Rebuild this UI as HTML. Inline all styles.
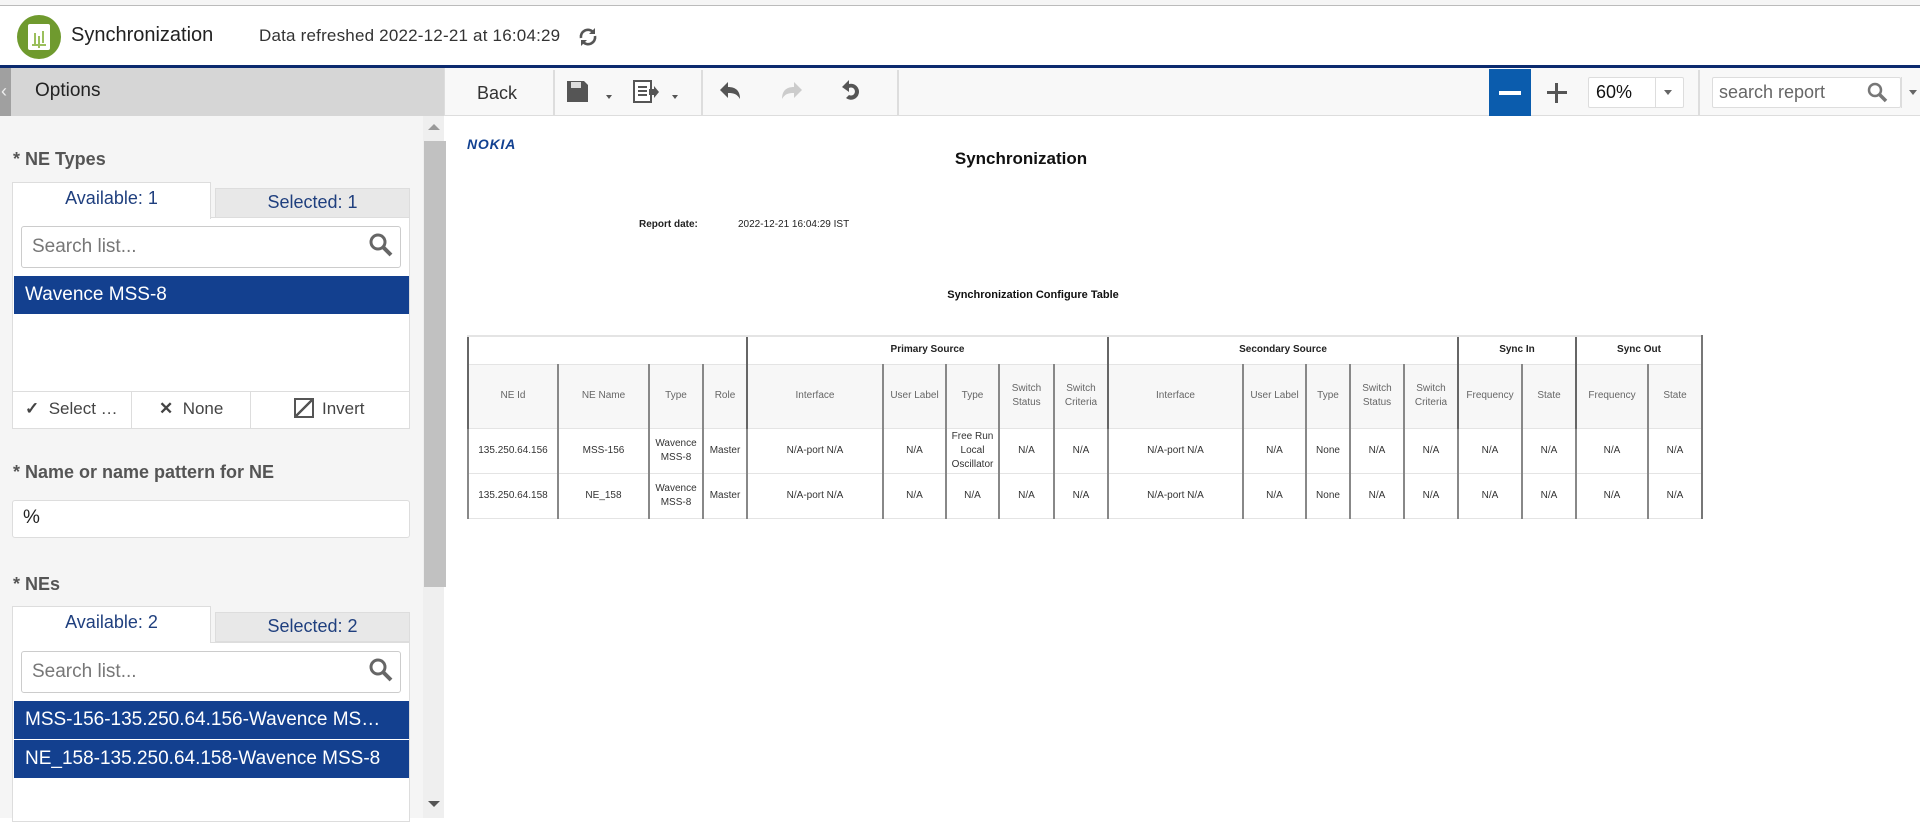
<!DOCTYPE html>
<html><head><meta charset="utf-8"><style>
*{box-sizing:border-box;margin:0;padding:0}
body{width:1920px;height:818px;overflow:hidden;background:#fff;font-family:"Liberation Sans",sans-serif;position:relative}
.a{position:absolute}
.lbl{position:absolute;left:13px;font-weight:bold;font-size:18px;color:#555}
.tab{position:absolute;font-size:18px;color:#1f3f7e;text-align:center}
.srch{position:absolute;left:21px;width:380px;height:42px;border:1px solid #ccc;border-radius:3px;background:#fff;font-size:19px;color:#777;padding:9px 10px}
.item{position:absolute;left:14px;width:395px;height:38px;background:#13408f;color:#fff;font-size:19px;padding:8px 11px;white-space:nowrap}
table{border-collapse:collapse;table-layout:fixed;position:absolute;left:467px;top:335px;font-size:10px;color:#333}
td,th{text-align:center;vertical-align:middle;border-left:2px solid #888;border-bottom:1px solid #e4e4e4;line-height:14px;padding:0 1px}
th{font-weight:normal;color:#666}
.g th{font-weight:bold;color:#222;height:28px;border-top:2px solid #e4e4e4}
.h th{height:64px;background:#f7f7f7}
.r td{height:45px}
.r2 td{height:45px}
.t{border-left-color:#666}
</style></head><body>
<div class="a" style="left:0;top:0;width:1920px;height:6px;background:#f5f5f5;border-bottom:1px solid #bbb"></div>
<div class="a" style="left:17px;top:15px;width:44px;height:44px;border-radius:50%;background:#6f9a2e"></div>
<div class="a" style="left:28px;top:24px;width:22px;height:26px;background:#fff;border-radius:2px"></div>
<div class="a" style="left:32px;top:32px;width:14px;height:14px;border-bottom:2px solid #9bbf5c"></div>
<div class="a" style="left:34px;top:33px;width:2px;height:12px;background:#9bbf5c;box-shadow:4px 3px 0 #9bbf5c,8px -2px 0 #9bbf5c"></div>
<div class="a" style="left:71px;top:24px;font-size:20px;color:#222">Synchronization</div>
<div class="a" style="left:259px;top:26px;font-size:17px;color:#333;letter-spacing:0.2px">Data refreshed 2022-12-21 at 16:04:29</div>
<svg class="a" style="left:576px;top:25px" width="24" height="24" viewBox="0 0 24 24"><path d="M5 13a7 7 0 0 1 12-6l1 1M19 11a7 7 0 0 1-12 6l-1-1" fill="none" stroke="#555" stroke-width="2.6"/><path d="M19 3v6h-6zM5 21v-6h6z" fill="#555"/></svg>
<div class="a" style="left:0;top:65px;width:1920px;height:3px;background:#0b2a6e"></div>
<div class="a" style="left:0;top:68px;width:444px;height:48px;background:#d6d6d6"></div>
<div class="a" style="left:0;top:68px;width:11px;height:48px;background:#a0a0a0;color:#eee;font-size:18px;padding-top:13px;padding-left:1px">‹</div>
<div class="a" style="left:35px;top:80px;font-size:19px;color:#222">Options</div>
<div class="a" style="left:0;top:116px;width:423px;height:702px;background:#f5f5f5"></div>
<div class="a" style="left:423px;top:116px;width:21px;height:702px;background:#efefef"></div>
<div class="a" style="left:424px;top:141px;width:22px;height:446px;background:#c1c1c1"></div>
<div class="a" style="left:428px;top:124px;border:6px solid transparent;border-bottom:6px solid #999;border-top:0"></div>
<div class="a" style="left:428px;top:801px;border:6px solid transparent;border-top:6px solid #555;border-bottom:0"></div>

<div class="lbl" style="top:149px">* NE Types</div>
<div class="a" style="left:12px;top:217px;width:398px;height:212px;background:#fff;border:1px solid #ddd"></div>
<div class="a" style="left:215px;top:188px;width:195px;height:30px;background:#e8e8e8;border:1px solid #ddd"></div>
<div class="a" style="left:12px;top:182px;width:199px;height:37px;background:#fff;border:1px solid #ddd;border-bottom:none"></div>
<div class="tab" style="left:12px;top:188px;width:199px">Available: 1</div>
<div class="tab" style="left:215px;top:192px;width:195px">Selected: 1</div>
<div class="srch" style="top:226px">Search list...</div>
<svg class="a" style="left:368px;top:232px" width="26" height="26" viewBox="0 0 26 26"><circle cx="10" cy="10" r="7" fill="none" stroke="#666" stroke-width="3"/><path d="M15 15l8 8" stroke="#666" stroke-width="4"/></svg>
<div class="item" style="top:276px">Wavence MSS-8</div>
<div class="a" style="left:12px;top:391px;width:398px;height:38px;border-top:1px solid #ddd"></div>
<div class="a" style="left:131px;top:392px;width:1px;height:37px;background:#ddd"></div>
<div class="a" style="left:250px;top:392px;width:1px;height:37px;background:#ddd"></div>
<div class="a" style="left:25px;top:399px;font-size:17px;color:#444"><b>✓</b>&nbsp; Select …</div>
<div class="a" style="left:159px;top:399px;font-size:17px;color:#444"><b>✕</b>&nbsp; None</div>
<div class="a" style="left:294px;top:398px;width:20px;height:20px;border:2px solid #555;background:linear-gradient(135deg,#fff 45%,#555 45%,#555 55%,#fff 55%)"></div>
<div class="a" style="left:322px;top:399px;font-size:17px;color:#444">Invert</div>

<div class="lbl" style="top:462px">* Name or name pattern for NE</div>
<div class="a" style="left:12px;top:500px;width:398px;height:38px;background:#fff;border:1px solid #ddd;border-radius:3px;font-size:19px;padding:6px 10px;color:#222">%</div>

<div class="lbl" style="top:574px">* NEs</div>
<div class="a" style="left:12px;top:642px;width:398px;height:180px;background:#fff;border:1px solid #ddd"></div>
<div class="a" style="left:215px;top:612px;width:195px;height:30px;background:#e8e8e8;border:1px solid #ddd"></div>
<div class="a" style="left:12px;top:606px;width:199px;height:37px;background:#fff;border:1px solid #ddd;border-bottom:none"></div>
<div class="tab" style="left:12px;top:612px;width:199px">Available: 2</div>
<div class="tab" style="left:215px;top:616px;width:195px">Selected: 2</div>
<div class="srch" style="top:651px">Search list...</div>
<svg class="a" style="left:368px;top:657px" width="26" height="26" viewBox="0 0 26 26"><circle cx="10" cy="10" r="7" fill="none" stroke="#666" stroke-width="3"/><path d="M15 15l8 8" stroke="#666" stroke-width="4"/></svg>
<div class="item" style="top:701px">MSS-156-135.250.64.156-Wavence MS…</div>
<div class="item" style="top:740px">NE_158-135.250.64.158-Wavence MSS-8</div>

<div class="a" style="left:444px;top:68px;width:1476px;height:48px;background:#f8f8f8;border-bottom:1px solid #ddd;border-left:1px solid #ddd"></div>
<div class="a" style="left:477px;top:83px;font-size:18px;color:#333">Back</div>
<div class="a" style="left:553px;top:70px;width:2px;height:45px;background:#ddd"></div>
<div class="a" style="left:701px;top:70px;width:2px;height:45px;background:#ddd"></div>
<div class="a" style="left:897px;top:70px;width:2px;height:45px;background:#ddd"></div>
<svg class="a" style="left:566px;top:80px" width="48" height="24"><path d="M1 1h17l4 4v17H1z" fill="#555"/><rect x="5" y="2" width="10" height="6" fill="#ddd"/><path d="M40 15h6l-3 4z" fill="#555"/></svg>
<svg class="a" style="left:633px;top:80px" width="52" height="24"><rect x="1" y="1" width="17" height="21" fill="#fff" stroke="#555" stroke-width="2"/><path d="M5 7h9M5 11h9M5 15h9" stroke="#555" stroke-width="2"/><path d="M16 9h5v-3l5 6-5 6v-3h-5z" fill="#555"/><path d="M39 15h6l-3 4z" fill="#555"/></svg>
<svg class="a" style="left:718px;top:80px" width="24" height="22"><path d="M2 10l8-8v5c8 0 12 4 12 12-3-5-6-6-12-6v5z" fill="#555"/></svg>
<svg class="a" style="left:780px;top:80px" width="24" height="22"><path d="M22 10l-8-8v5c-8 0-12 4-12 12 3-5 6-6 12-6v5z" fill="#ccc"/></svg>
<svg class="a" style="left:840px;top:78px" width="24" height="24"><path d="M2 9l7-7v4a8 8 0 1 1-3 14l3-3a4 4 0 1 0 0-7v4z" fill="#555"/></svg>
<div class="a" style="left:1489px;top:69px;width:42px;height:47px;background:#0b5cad"></div>
<div class="a" style="left:1499px;top:91px;width:22px;height:4px;background:#fff"></div>
<div class="a" style="left:1547px;top:91px;width:20px;height:3px;background:#555"></div>
<div class="a" style="left:1555px;top:83px;width:3px;height:20px;background:#555"></div>
<div class="a" style="left:1588px;top:77px;width:96px;height:31px;background:#fff;border:1px solid #ddd;border-radius:2px"></div>
<div class="a" style="left:1655px;top:78px;width:1px;height:29px;background:#ddd"></div>
<div class="a" style="left:1596px;top:82px;font-size:18px;color:#111">60%</div>
<div class="a" style="left:1664px;top:90px;border:4px solid transparent;border-top:5px solid #666;border-bottom:0"></div>
<div class="a" style="left:1698px;top:70px;width:2px;height:45px;background:#ddd"></div>
<div class="a" style="left:1712px;top:77px;width:189px;height:31px;background:#fff;border:1px solid #ddd;border-radius:2px"></div>
<div class="a" style="left:1719px;top:82px;font-size:18px;color:#666">search report</div>
<svg class="a" style="left:1866px;top:81px" width="24" height="24"><circle cx="9" cy="9" r="6" fill="none" stroke="#777" stroke-width="2.5"/><path d="M13 13l7 7" stroke="#777" stroke-width="3.5"/></svg>
<div class="a" style="left:1901px;top:77px;width:1px;height:31px;background:#ddd"></div>
<div class="a" style="left:1909px;top:90px;border:4px solid transparent;border-top:5px solid #666;border-bottom:0"></div>

<div class="a" style="left:467px;top:136px;font-size:14px;font-weight:bold;font-style:italic;color:#124191;letter-spacing:0.8px">NOKIA</div>
<div class="a" style="left:921px;top:149px;width:200px;text-align:center;font-size:17px;font-weight:bold;color:#111">Synchronization</div>
<div class="a" style="left:639px;top:219px;font-size:10px;font-weight:bold;color:#222">Report date:</div>
<div class="a" style="left:738px;top:219px;font-size:10px;color:#222">2022-12-21 16:04:29 IST</div>
<div class="a" style="left:883px;top:289px;width:300px;text-align:center;font-size:11px;font-weight:bold;color:#111">Synchronization Configure Table</div>

<table>
<colgroup><col style="width:90px"><col style="width:91px"><col style="width:54px"><col style="width:44px"><col style="width:136px"><col style="width:63px"><col style="width:53px"><col style="width:55px"><col style="width:54px"><col style="width:135px"><col style="width:63px"><col style="width:44px"><col style="width:54px"><col style="width:54px"><col style="width:64px"><col style="width:54px"><col style="width:72px"><col style="width:54px"></colgroup>
<tr class="g"><th colspan="4" class="t"></th><th colspan="5" class="t">Primary Source</th><th colspan="5" class="t">Secondary Source</th><th colspan="2" class="t">Sync In</th><th colspan="2" class="t" style="border-right:2px solid #777">Sync Out</th></tr>
<tr class="h"><th class="t">NE Id</th><th>NE Name</th><th>Type</th><th>Role</th><th class="t">Interface</th><th>User Label</th><th>Type</th><th>Switch<br>Status</th><th>Switch<br>Criteria</th><th class="t">Interface</th><th>User Label</th><th>Type</th><th>Switch<br>Status</th><th>Switch<br>Criteria</th><th class="t">Frequency</th><th>State</th><th class="t">Frequency</th><th style="border-right:2px solid #777">State</th></tr>
<tr class="r"><td>135.250.64.156</td><td>MSS-156</td><td>Wavence<br>MSS-8</td><td>Master</td><td>N/A-port N/A</td><td>N/A</td><td>Free Run<br>Local<br>Oscillator</td><td>N/A</td><td>N/A</td><td>N/A-port N/A</td><td>N/A</td><td>None</td><td>N/A</td><td>N/A</td><td>N/A</td><td>N/A</td><td>N/A</td><td style="border-right:2px solid #777">N/A</td></tr>
<tr class="r2"><td>135.250.64.158</td><td>NE_158</td><td>Wavence<br>MSS-8</td><td>Master</td><td>N/A-port N/A</td><td>N/A</td><td>N/A</td><td>N/A</td><td>N/A</td><td>N/A-port N/A</td><td>N/A</td><td>None</td><td>N/A</td><td>N/A</td><td>N/A</td><td>N/A</td><td>N/A</td><td style="border-right:2px solid #777">N/A</td></tr>
</table>
</body></html>
